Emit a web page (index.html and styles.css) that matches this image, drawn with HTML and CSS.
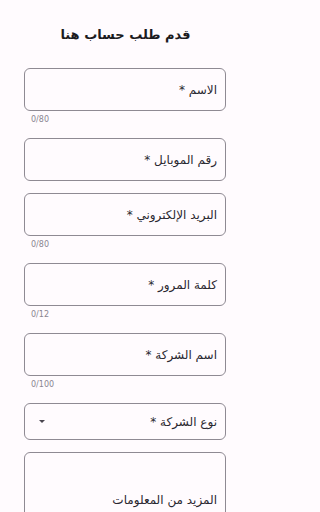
FILE: index.html
```html
<!DOCTYPE html>
<html lang="ar">
<head>
<meta charset="utf-8">
<link rel="stylesheet" href="styles.css">
</head>
<body>
<main class="page" dir="rtl">
  <h1 class="title">قدم طلب حساب هنا</h1>
  <form class="form">
    <div class="field">
      <div class="box"><span class="label">الاسم *</span></div>
      <div class="counter">0/80</div>
    </div>
    <div class="field">
      <div class="box"><span class="label">رقم الموبايل *</span></div>
    </div>
    <div class="field">
      <div class="box"><span class="label">البريد الإلكتروني *</span></div>
      <div class="counter">0/80</div>
    </div>
    <div class="field">
      <div class="box"><span class="label">كلمة المرور *</span></div>
      <div class="counter">0/12</div>
    </div>
    <div class="field">
      <div class="box"><span class="label">اسم الشركة *</span></div>
      <div class="counter">0/100</div>
    </div>
    <div class="field">
      <div class="box select"><span class="label">نوع الشركة *</span><span class="arrow"></span></div>
    </div>
    <div class="field">
      <div class="box multi"><span class="label">المزيد من المعلومات</span></div>
    </div>
  </form>
</main>
</body>
</html>
```
FILE: styles.css
```css
html, body {
  margin: 0;
  padding: 0;
  background: #fffbfe;
  font-family: "DejaVu Sans", "Noto Sans", sans-serif;
  color: #1c1b1f;
}
.page {
  width: 251px;
  height: 512px;
  overflow: hidden;
  display: flex;
  flex-direction: column;
  padding-top: 24px;
  box-sizing: border-box;
}
.title {
  margin: 0 0 22px;
  text-align: center;
  font-size: 13px;
  font-weight: 700;
  line-height: 22px;
}
.form {
  display: flex;
  flex-direction: column;
  gap: 12px;
  padding: 0 25px 0 24px;
}
.field {
  display: flex;
  flex-direction: column;
}
.box {
  height: 43px;
  box-sizing: border-box;
  border: 1px solid #8f8a93;
  border-radius: 6px;
  display: flex;
  align-items: center;
  padding: 0 8px 0 12px;
}
.label {
  font-size: 12px;
  color: #2a2830;
  line-height: 18px;
}
.select {
  height: 37px;
  justify-content: space-between;
}
.arrow {
  width: 0;
  height: 0;
  border-left: 3px solid transparent;
  border-right: 3px solid transparent;
  border-top: 3px solid #49454f;
  margin-left: 2px;
}
.multi {
  height: 110px;
  flex-shrink: 0;
  align-items: flex-start;
  padding-top: 38px;
}
.counter {
  height: 15px;
  box-sizing: border-box;
  padding-top: 5px;
  line-height: 8px;
  font-size: 8px;
  color: #8a8590;
  text-align: left;
  padding-left: 7px;
  direction: ltr;
}
```
